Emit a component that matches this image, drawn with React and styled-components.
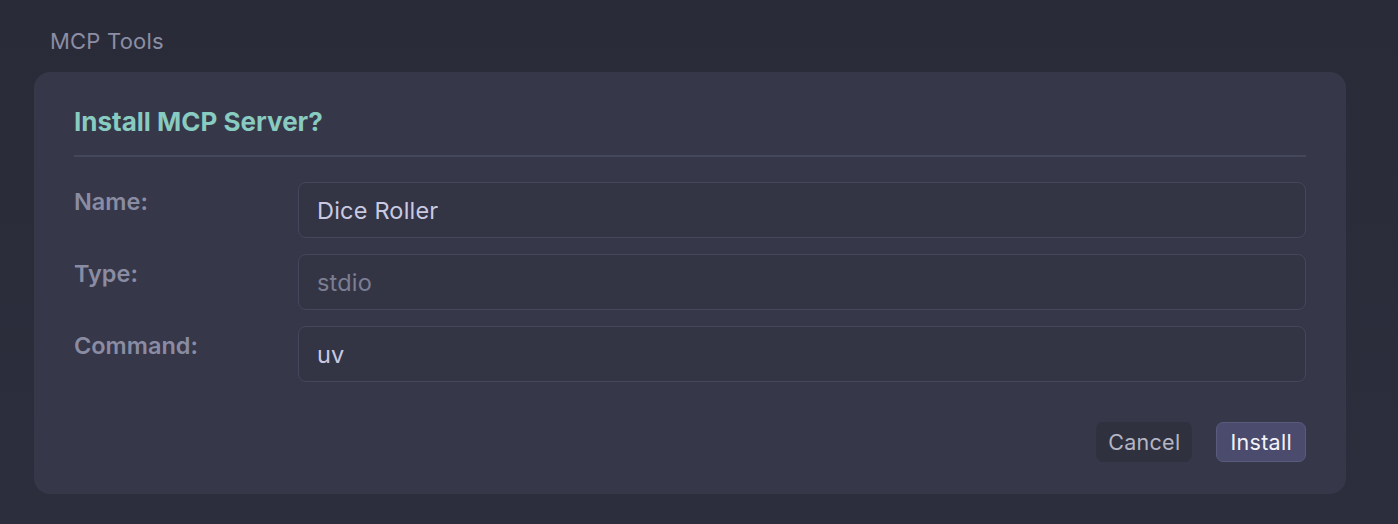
import React from 'react';
import styled, { createGlobalStyle } from 'styled-components';

const GlobalStyle = createGlobalStyle`
  html, body {
    margin: 0;
    padding: 0;
    background: linear-gradient(180deg, #2a2b38 0%, #2d2e3d 100%);
    font-family: Inter, "Noto Sans", "Liberation Sans", sans-serif;
    -webkit-font-smoothing: antialiased;
  }
  body { min-height: 524px; }
`;

const Page = styled.div`
  padding: 26px 52px 30px 34px;
  box-sizing: border-box;
`;

const SectionTitle = styled.div`
  padding-left: 16px;
  font-size: 22px;
  line-height: 30px;
  letter-spacing: 0.2px;
  color: #8c8ea4;
  margin-bottom: 16px;
`;

const Card = styled.div`
  background: #363748;
  border-radius: 16px;
  padding: 34px 40px 32px 40px;
`;

const Heading = styled.h2`
  margin: 0;
  font-size: 26px;
  line-height: 32px;
  font-weight: 700;
  color: #88cbc0;
`;

const Divider = styled.div`
  height: 2px;
  background: #45475a;
  margin: 17px 0 25px;
`;

const Form = styled.div`
  display: grid;
  grid-template-columns: 224px 1fr;
  row-gap: 16px;
`;

const Label = styled.div`
  padding-top: 5px;
  font-size: 23.5px;
  line-height: 30px;
  font-weight: 600;
  color: #8a8ca3;
`;

const Field = styled.div`
  height: 56px;
  box-sizing: border-box;
  border: 1.5px solid #45475a;
  border-radius: 8px;
  background: #333545;
  padding: 0 18px;
  display: flex;
  align-items: center;
  font-size: 23.5px;
  letter-spacing: 0.2px;
  color: ${(p) => (p.$muted ? '#7c7e93' : '#c9cae2')};
`;

const Actions = styled.div`
  display: flex;
  justify-content: flex-end;
  gap: 24px;
  margin-top: 40px;
`;

const Button = styled.button`
  height: 40px;
  box-sizing: border-box;
  padding: 0 ${(p) => (p.$primary ? '13px' : '11px')};
  border-radius: 7px;
  font-family: inherit;
  font-size: 21.5px;
  letter-spacing: 0.3px;
  border: 1.5px solid ${(p) => (p.$primary ? '#585a7e' : 'transparent')};
  background: ${(p) => (p.$primary ? '#4a4b6d' : '#30313e')};
  color: ${(p) => (p.$primary ? '#f2f2f8' : '#b4b6c4')};
  cursor: pointer;
`;

const fields = [
  { label: 'Name:', value: 'Dice Roller' },
  { label: 'Type:', value: 'stdio', muted: true },
  { label: 'Command:', value: 'uv' },
];

export default function App() {
  return (
    <>
      <GlobalStyle />
      <Page>
        <SectionTitle>MCP Tools</SectionTitle>
        <Card>
          <Heading>Install MCP Server?</Heading>
          <Divider />
          <Form>
            {fields.map((f) => (
              <React.Fragment key={f.label}>
                <Label>{f.label}</Label>
                <Field $muted={f.muted}>{f.value}</Field>
              </React.Fragment>
            ))}
          </Form>
          <Actions>
            <Button>Cancel</Button>
            <Button $primary>Install</Button>
          </Actions>
        </Card>
      </Page>
    </>
  );
}
